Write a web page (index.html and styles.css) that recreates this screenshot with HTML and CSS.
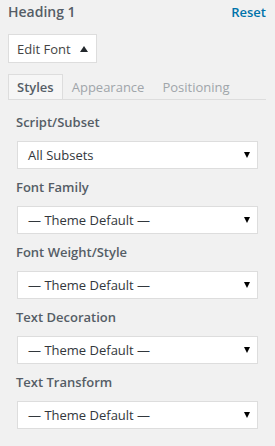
FILE: index.html
```html
<!DOCTYPE html>
<html lang="en">
<head>
  <meta charset="UTF-8">
  <meta name="viewport" content="width=device-width, initial-scale=1.0">
  <title>Heading 1</title>
  <link rel="stylesheet" href="styles.css">
</head>
<body>
  <div class="control">
    <div class="control-head">
      <span class="control-title">Heading 1</span>
      <a class="reset" href="#">Reset</a>
    </div>

    <button class="edit-font">Edit Font <span class="up-arrow"></span></button>

    <div class="tabs">
      <div class="tab active">Styles</div>
      <div class="tab">Appearance</div>
      <div class="tab">Positioning</div>
    </div>

    <div class="panel">
      <div class="field">
        <label>Script/Subset</label>
        <div class="select"><span>All Subsets</span><span class="down-arrow"></span></div>
      </div>
      <div class="field">
        <label>Font Family</label>
        <div class="select"><span>— Theme Default —</span><span class="down-arrow"></span></div>
      </div>
      <div class="field">
        <label>Font Weight/Style</label>
        <div class="select"><span>— Theme Default —</span><span class="down-arrow"></span></div>
      </div>
      <div class="field">
        <label>Text Decoration</label>
        <div class="select"><span>— Theme Default —</span><span class="down-arrow"></span></div>
      </div>
      <div class="field">
        <label>Text Transform</label>
        <div class="select"><span>— Theme Default —</span><span class="down-arrow"></span></div>
      </div>
    </div>
  </div>
</body>
</html>
```

FILE: styles.css
```css
* { box-sizing: border-box; }
body {
  margin: 0;
  background: #f1f1f1;
  font-family: 'Open Sans', sans-serif;
  font-size: 13px;
  color: #555d66;
}
.control {
  padding: 2px 9px 0 8px;
}
.control-head {
  display: flex;
  justify-content: space-between;
  align-items: baseline;
  line-height: 20px;
}
.control-title {
  font-size: 14px;
  font-weight: 600;
}
.reset {
  color: #0073aa;
  font-weight: 600;
  text-decoration: none;
}
.edit-font {
  display: flex;
  align-items: center;
  margin-top: 12px;
  height: 29px;
  padding: 0 8px 0 8px;
  background: white;
  border: 1px solid #ddd;
  font-family: 'Open Sans', sans-serif;
  font-size: 13px;
  color: #444;
  width: 89px;
}
.up-arrow {
  margin-left: auto;
  width: 0;
  height: 0;
  border-left: 4px solid transparent;
  border-right: 4px solid transparent;
  border-bottom: 6px solid #23282d;
}
.tabs {
  display: flex;
  margin-top: 11px;
  border-bottom: 1px solid #ddd;
}
.tab {
  padding: 0 8px;
  line-height: 24px;
  border: 1px solid transparent;
  border-bottom: none;
  color: #a0a5aa;
}
.tab.active {
  background: #f6f6f6;
  border-color: #ddd;
  color: #555d66;
  font-weight: 600;
}
.panel {
  padding: 13px 8px 0 8px;
}
.field label {
  display: block;
  line-height: 18px;
  font-weight: 600;
  margin-bottom: 10px;
}
.field {
  margin-bottom: 9px;
}
.select {
  display: flex;
  align-items: center;
  height: 28px;
  margin-left: 1px;
  padding: 0 7px 0 10px;
  background: white;
  border: 1px solid #ddd;
  color: #32373c;
}
.down-arrow {
  margin-left: auto;
  width: 0;
  height: 0;
  border-left: 3px solid transparent;
  border-right: 3px solid transparent;
  border-top: 6px solid #000;
}
```
